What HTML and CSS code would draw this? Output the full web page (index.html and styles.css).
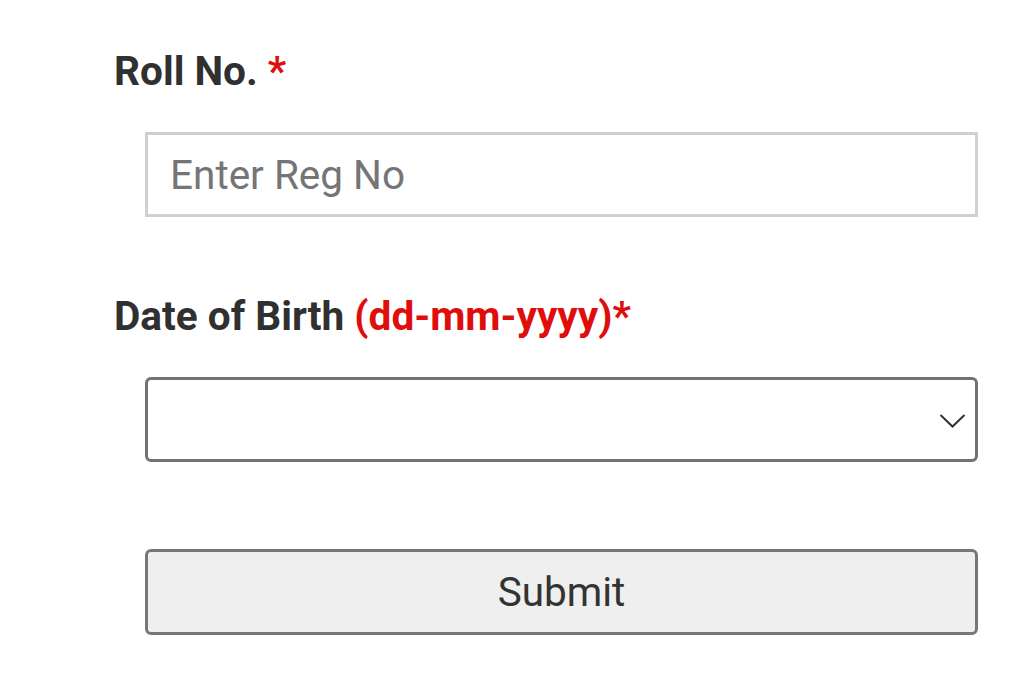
FILE: index.html
```html
<!DOCTYPE html>
<html>
<head>
<meta charset="utf-8">
<link rel="stylesheet" href="styles.css">
</head>
<body>
<form class="form">
  <label class="label label-first">Roll No. <span class="req">*</span></label>
  <input class="text-input" type="text" placeholder="Enter Reg No">
  <label class="label label-second">Date of Birth <span class="req">(dd-mm-yyyy)*</span></label>
  <div class="select-wrap">
    <select class="select"><option></option></select>
    <svg class="chevron" width="28" height="16" viewBox="0 0 28 16"><polyline points="1.5,2 13.5,13.5 25.5,2" fill="none" stroke="#333" stroke-width="2"/></svg>
  </div>
  <button class="submit" type="button">Submit</button>
</form>
</body>
</html>
```
FILE: styles.css
```css
html, body {
  margin: 0;
  padding: 0;
  background: #fff;
}
.form {
  display: flex;
  flex-direction: column;
  align-items: flex-start;
  padding: 48px 0 0 114px;
  font-family: Roboto, "Liberation Sans", sans-serif;
}
.label {
  font-size: 40.6px;
  font-weight: 700;
  line-height: 47px;
  color: #303030;
}
.req {
  color: #e00d0d;
}
.text-input,
.select-wrap,
.submit {
  margin-left: 31px;
  width: 833px;
  box-sizing: border-box;
}
.text-input {
  margin-top: 37px;
  height: 85px;
  border: 3px solid #d0d0d0;
  border-radius: 0;
  padding: 0 22px;
  font-family: Roboto, "Liberation Sans", sans-serif;
  font-size: 40.5px;
  color: #333;
  outline: none;
}
.text-input::placeholder {
  color: #757575;
}
.label-second {
  margin-top: 76px;
}
.select-wrap {
  position: relative;
  margin-top: 37px;
  height: 85px;
}
.select {
  appearance: none;
  -webkit-appearance: none;
  width: 100%;
  height: 100%;
  box-sizing: border-box;
  border: 3px solid #727272;
  border-radius: 6px;
  background: #fff;
  font-size: 40px;
  outline: none;
}
.chevron {
  position: absolute;
  right: 11px;
  top: 36px;
}
.submit {
  margin-top: 87px;
  height: 86px;
  border: 3px solid #777;
  border-radius: 6px;
  background: #efefef;
  font-family: Roboto, "Liberation Sans", sans-serif;
  font-size: 40.5px;
  color: #333;
  padding: 0;
}
```
